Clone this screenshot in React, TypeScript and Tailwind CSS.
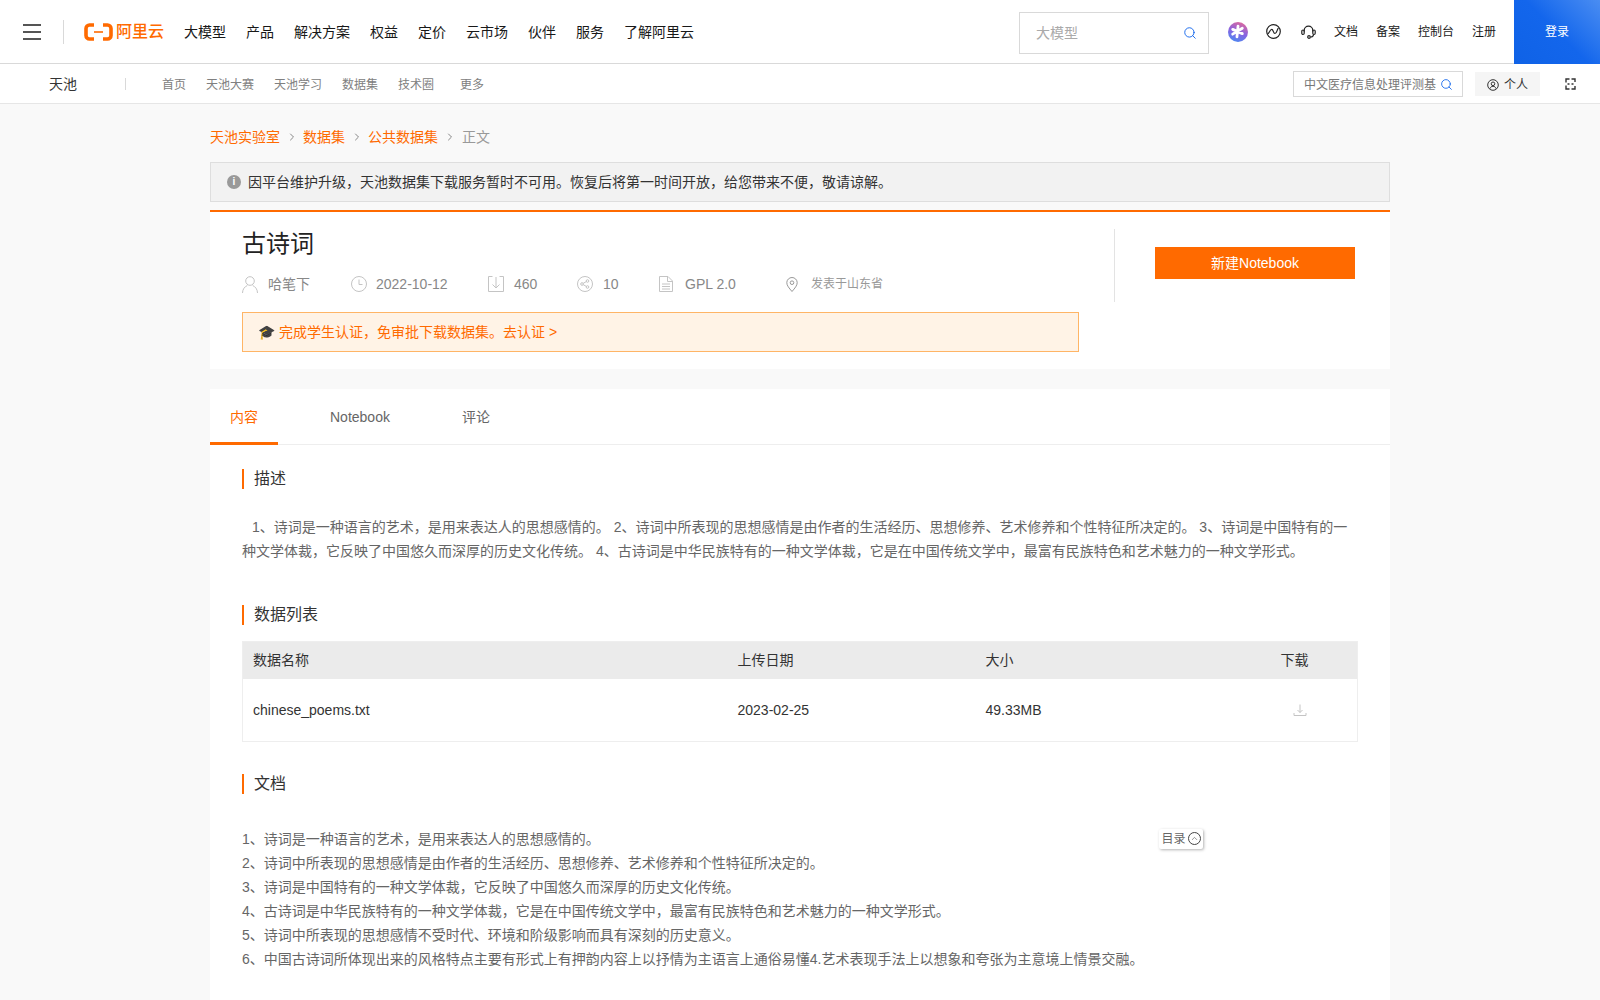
import { Search, ChevronRight, ChevronUp } from "lucide-react";

const navItems = ["大模型", "产品", "解决方案", "权益", "定价", "云市场", "伙伴", "服务", "了解阿里云"];
const subItems = [
  { label: "首页", w: "w-[44px]" },
  { label: "天池大赛", w: "w-[68px]" },
  { label: "天池学习", w: "w-[68px]" },
  { label: "数据集", w: "w-[56px]" },
  { label: "技术圈", w: "w-[62px]" },
  { label: "更多", w: "w-[31px]" },
];
const docLines = [
  "1、诗词是一种语言的艺术，是用来表达人的思想感情的。",
  "2、诗词中所表现的思想感情是由作者的生活经历、思想修养、艺术修养和个性特征所决定的。",
  "3、诗词是中国特有的一种文学体裁，它反映了中国悠久而深厚的历史文化传统。",
  "4、古诗词是中华民族特有的一种文学体裁，它是在中国传统文学中，最富有民族特色和艺术魅力的一种文学形式。",
  "5、诗词中所表现的思想感情不受时代、环境和阶级影响而具有深刻的历史意义。",
  "6、中国古诗词所体现出来的风格特点主要有形式上有押韵内容上以抒情为主语言上通俗易懂4.艺术表现手法上以想象和夸张为主意境上情景交融。",
];

function Logo() {
  return (
    <div className="flex items-center text-[#ff6a00]">
      <svg width="29" height="18" viewBox="0 0 29 18" fill="none" stroke="#ff6a00">
        <path d="M10 2H5.500A3.500 3.500 0 0 0 2 5.500v7A3.500 3.500 0 0 0 5.500 16H10" strokeWidth="3.600" />
        <path d="M19 2h4.500A3.500 3.500 0 0 1 27 5.500v7a3.500 3.500 0 0 1-3.500 3.500H19" strokeWidth="3.600" />
        <path d="M10 9h9" strokeWidth="1.600" />
      </svg>
      <span className="ml-[3px] text-[16px] font-medium leading-none">阿里云</span>
    </div>
  );
}

function Heading({ children }: { children: string }) {
  return <h3 className="h-5 border-l-2 border-[#ff6a00] pl-[10px] text-[16px] leading-5 text-[#333]">{children}</h3>;
}

function MetaItem({ icon, text, w, iw = "w-[26px]", small }: { icon: React.ReactNode; text: string; w: string; iw?: string; small?: boolean }) {
  return (
    <div className={`flex h-5 items-center ${w}`}>
      <span className={`flex items-center ${iw}`}>{icon}</span>
      <span className={small ? "text-[12px] text-[#999]" : "text-[14px] text-[#888]"}>{text}</span>
    </div>
  );
}

const UserIcon = (
  <svg width="16" height="17" viewBox="0 0 16 17" fill="none" stroke="#c4c4c4">
    <circle cx="8" cy="5" r="4.300" />
    <path d="M.500 17c0-4 2.500-6.500 4.800-7.500M15.500 17c0-4-2.500-6.500-4.800-7.500" />
  </svg>
);
const ClockIcon = (
  <svg width="16" height="16" viewBox="0 0 16 16" fill="none" stroke="#c4c4c4">
    <circle cx="8" cy="8" r="7.500" />
    <path d="M8 3.500V8.500H11.500" />
  </svg>
);
const BoxDownIcon = (
  <svg width="16" height="16" viewBox="0 0 16 16" fill="none" stroke="#c4c4c4">
    <path d="M4.500.500H.500v15h15V.500h-4" />
    <path d="M8 1v11M4.500 8.500L8 12l3.500-3.500" />
  </svg>
);
const ShareIcon = (
  <svg width="16" height="16" viewBox="0 0 16 16" fill="none" stroke="#c4c4c4">
    <circle cx="8" cy="8" r="7.500" />
    <circle cx="5" cy="8" r="1.300" />
    <circle cx="10.500" cy="5" r="1.300" />
    <circle cx="10.500" cy="11" r="1.300" />
    <path d="M6.200 7.300L9.300 5.600M6.200 8.700l3.100 1.700" />
  </svg>
);
const FileIcon = (
  <svg width="14" height="16" viewBox="0 0 14 16" fill="none" stroke="#c4c4c4">
    <path d="M.500.500h8.500l4.500 4.500v10.500H.500z" />
    <path d="M8.500.500v5h5M3 8h8M3 10.500h8M3 13h8" />
  </svg>
);
const PinIcon = (
  <svg width="12" height="15" viewBox="0 0 12 15" fill="none" stroke="#999">
    <path d="M6 14.500C3 11 .800 8.500.800 5.700a5.200 5.200 0 0 1 10.400 0C11.200 8.500 9 11 6 14.500z" />
    <circle cx="6" cy="5.700" r="1.800" />
  </svg>
);

export default function App() {
  return (
    <div className="h-[1000px] overflow-hidden bg-[#f9f9f9] font-['Liberation_Sans','Noto_Sans_CJK_SC',sans-serif]">
      <header className="flex h-16 items-center border-b border-[#d9d9d9] bg-white">
        <div className="ml-[23px] flex h-[16px] w-[18px] flex-col justify-between">
          <span className="h-[2px] bg-[#555]"></span>
          <span className="h-[2px] bg-[#555]"></span>
          <span className="h-[2px] bg-[#555]"></span>
        </div>
        <div className="ml-[22px] h-6 w-px bg-[#d9d9d9]"></div>
        <div className="ml-5"><Logo /></div>
        <nav className="ml-5 mt-[2px] flex gap-5 text-[14px] text-[#181818]">
          {navItems.map((n) => (
            <a key={n} href="#">{n}</a>
          ))}
        </nav>
        <div className="ml-auto mt-[3px] flex h-[42px] w-[190px] items-center justify-between border border-[#d9d9d9] pl-4 pr-[11px] text-[14px] text-[#aaa]">
          <span>大模型</span>
          <Search size={14} color="#1366ec" strokeWidth={1.600} />
        </div>
        <div className="ml-[19px] flex h-5 w-5 items-center justify-center rounded-full bg-[linear-gradient(200deg,#ee6a8f,#8a63e0_50%,#3f8ff5)]">
          <svg width="15" height="15" viewBox="0 0 14 14" stroke="#fff" strokeWidth="2.600" strokeLinecap="round">
            <path d="M7.500 2L6.500 12M2.500 5l9 4M11.500 4l-9 5.500" />
          </svg>
        </div>
        <svg className="ml-[18px]" width="15" height="15" viewBox="0 0 15 15" fill="none" stroke="#222" strokeWidth="1.200">
          <circle cx="7.500" cy="7.500" r="6.800" />
          <path d="M1.500 10c2-.5 2-4 4-4.500s1.500 4 3.500 4 2-4.500 3.500-5.500" />
        </svg>
        <svg className="ml-5" width="15" height="14" viewBox="0 0 15 14" fill="none" stroke="#222" strokeWidth="1.200">
          <path d="M3.200 6.500V5.500a4.300 4.300 0 0 1 8.600 0v1" />
          <rect x=".800" y="5" width="2.400" height="4.500" rx="1.200" />
          <rect x="11.800" y="5" width="2.400" height="4.500" rx="1.200" />
          <path d="M12.500 9.500c0 1.800-1.500 2.500-3 2.500" />
          <circle cx="8" cy="12" r="1.300" />
        </svg>
        <div className="ml-[18px] flex gap-[18px] text-[12px] text-[#181818]">
          <a href="#">文档</a>
          <a href="#">备案</a>
          <a href="#">控制台</a>
          <a href="#">注册</a>
        </div>
        <button className="ml-[18px] h-16 w-[86px] bg-[linear-gradient(225deg,#4a8df2,#1366ec_50%,#0f62e6)] text-[12px] text-white">登录</button>
      </header>

      <div className="flex h-10 items-center border-b border-[#e6e6e6] bg-white">
        <span className="ml-[49px] mt-[2px] text-[14px] text-[#333]">天池</span>
        <span className="ml-[48px] h-3 w-px bg-[#d9d9d9]"></span>
        <nav className="ml-9 mt-[2px] flex text-[12px] text-[#808080]">
          {subItems.map((s) => (
            <a key={s.label} href="#" className={`${s.w} whitespace-nowrap`}>{s.label}</a>
          ))}
        </nav>
        <div className="ml-auto flex h-[26px] w-[170px] items-center gap-[4px] border border-[#d9d9d9] pl-[10px] pt-[2px] text-[12px] text-[#777]">
          <span className="whitespace-nowrap">中文医疗信息处理评测基</span>
          <Search size={13} color="#1366ec" strokeWidth={1.600} />
        </div>
        <div className="ml-3 flex h-6 w-[65px] items-center justify-center gap-[5px] bg-[#f5f5f5] pt-[2px] text-[12px] text-[#333]">
          <svg width="12" height="12" viewBox="0 0 12 12" fill="none" stroke="#333">
            <circle cx="6" cy="6" r="5.300" />
            <circle cx="6" cy="4.800" r="1.800" />
            <path d="M2.800 9.800c.6-1.800 1.800-2.500 3.200-2.500s2.600.7 3.200 2.500" />
          </svg>
          <span>个人</span>
        </div>
        <svg className="ml-[25px] mr-6" width="11" height="12" viewBox="0 0 11 12" fill="none" stroke="#333" strokeWidth="1.400">
          <path d="M4.500 1H1v3.500M6.500 1H10v3M4.500 11H1V7.500M6.500 11H10V8" />
          <path d="M2.500 6h2M6.500 6h2" />
        </svg>
      </div>

      <main className="mx-auto w-[1180px]">
        <div className="flex h-[58px] items-center pt-2 text-[14px] text-[#ff6a00]">
          <a href="#">天池实验室</a>
          <ChevronRight size={12} className="ml-[6px] mr-[5px] text-[#888]" />
          <a href="#">数据集</a>
          <ChevronRight size={12} className="ml-[6px] mr-[5px] text-[#888]" />
          <a href="#">公共数据集</a>
          <ChevronRight size={12} className="mx-[6px] text-[#888]" />
          <span className="text-[#999]">正文</span>
        </div>

        <div className="flex h-10 items-center border border-[#dedede] bg-[#f2f2f2] pl-4 text-[14px] text-[#333]">
          <span className="flex h-[14px] w-[14px] items-center justify-center rounded-full bg-[#999] text-[10px] font-bold leading-none text-white">i</span>
          <span className="ml-[7px]">因平台维护升级，天池数据集下载服务暂时不可用。恢复后将第一时间开放，给您带来不便，敬请谅解。</span>
        </div>

        <section className="mt-2 flex border-t-2 border-[#ff6a00] bg-white">
          <div className="w-[904px] pl-8 pt-4 pb-[17px]">
            <h1 className="text-[24px] leading-8 text-[#222]">古诗词</h1>
            <div className="mt-[14px] flex">
              <MetaItem w="w-[109px]" text="哈笔下" icon={UserIcon} />
              <MetaItem w="w-[137px]" iw="w-[25px]" text="2022-10-12" icon={ClockIcon} />
              <MetaItem w="w-[89px]" text="460" icon={BoxDownIcon} />
              <MetaItem w="w-[82px]" text="10" icon={ShareIcon} />
              <MetaItem w="w-[127px]" text="GPL 2.0" icon={FileIcon} />
              <MetaItem w="w-[100px]" iw="w-[25px]" small text="发表于山东省" icon={PinIcon} />
            </div>
            <div className="mt-[18px] flex h-10 w-[837px] items-center border border-[#ffb566] bg-[#fff3e6] pl-[15px] text-[14px] text-[#ff6a00]">
              <span className="mr-1 text-[14px]">🎓</span>
              <a href="#">完成学生认证，免审批下载数据集。去认证 &gt;</a>
            </div>
          </div>
          <div className="mt-[17px] h-[73px] border-l border-[#e3e3e3] pl-[40px] pt-[18px]">
            <button className="h-8 w-[200px] bg-[#ff6a00] text-[14px] text-white">新建Notebook</button>
          </div>
        </section>

        <section className="mt-5 bg-white pb-10">
          <div className="flex h-14 gap-8 border-b border-[#eee] text-[14px] text-[#666]">
            <a href="#" className="flex h-14 items-center border-b-[3px] border-[#ff6a00] px-5 pt-[3px] text-[#ff6a00]">内容</a>
            <a href="#" className="flex items-center px-5 pt-[2px]">Notebook</a>
            <a href="#" className="flex items-center px-5 pt-[2px]">评论</a>
          </div>

          <div className="px-8 pt-6">
            <Heading>描述</Heading>
            <p className="mt-[26px] text-[14px] leading-6 text-[#666]">
              <span className="ml-[10px]">1、诗词是一种语言的艺术，是用来表达人的思想感情的。 2、诗词中所表现的思想感情是由作者的生活经历、思想修养、艺术修养和个性特征所决定的。 3、诗词是中国特有的一种文学体裁，它反映了中国悠久而深厚的历史文化传统。 4、古诗词是中华民族特有的一种文学体裁，它是在中国传统文学中，最富有民族特色和艺术魅力的一种文学形式。</span>
            </p>

            <div className="mt-[42px]"><Heading>数据列表</Heading></div>
            <table className="mt-4 w-full table-fixed border border-[#eee] text-[14px] text-[#333]">
              <thead>
                <tr className="h-[37px] bg-[#ebebeb] text-left">
                  <th className="w-[495px] pl-[10px] font-normal">数据名称</th>
                  <th className="w-[248px] font-normal">上传日期</th>
                  <th className="w-[248px] font-normal">大小</th>
                  <th className="pl-[47px] font-normal">下载</th>
                </tr>
              </thead>
              <tbody>
                <tr className="h-[63px]">
                  <td className="pl-[10px] pt-[2px]">chinese_poems.txt</td>
                  <td className="pt-[2px]">2023-02-25</td>
                  <td className="pt-[2px]">49.33MB</td>
                  <td className="pl-[59px]">
                    <svg width="14" height="14" viewBox="0 0 14 14" fill="none" stroke="#c4c4c4">
                      <path d="M7 1.500v8M4.500 7L7 9.500 9.500 7M1 10v2.500h12V10" />
                    </svg>
                  </td>
                </tr>
              </tbody>
            </table>

            <div className="mt-8"><Heading>文档</Heading></div>
            <div className="relative mt-[33px] text-[14px] leading-6 text-[#666]">
              {docLines.map((l) => (
                <p key={l}>{l}</p>
              ))}
              <div className="absolute left-[917px] top-[2px] flex h-5 w-11 items-center justify-center gap-[2px] rounded-[2px] bg-white text-[12px] text-[#666] shadow-[1px_1px_3px_rgba(0,0,0,0.3)]">
                <span>目录</span>
                <span className="mb-[2px] flex h-[13px] w-[13px] items-center justify-center rounded-full border border-[#444]">
                  <ChevronUp size={9} strokeWidth={1.500} color="#444" />
                </span>
              </div>
            </div>
          </div>
        </section>
      </main>
    </div>
  );
}
